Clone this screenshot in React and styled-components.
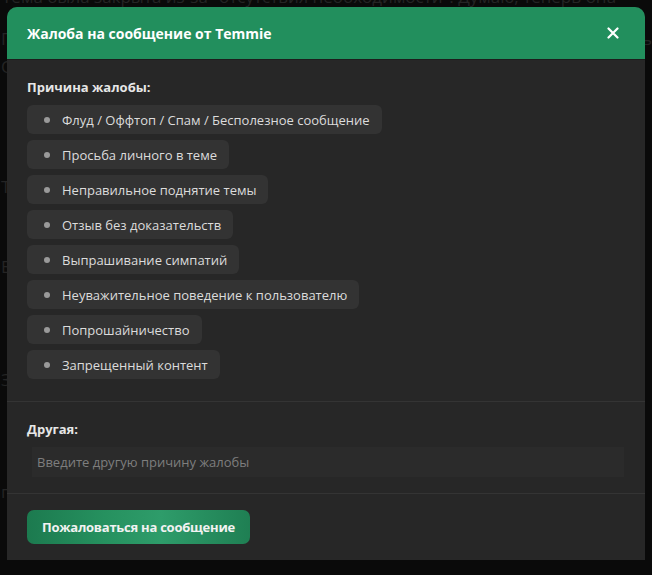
import styled, { createGlobalStyle } from "styled-components";

const GlobalStyle = createGlobalStyle`
  html, body {
    margin: 0;
    padding: 0;
    background: #0a0a0a;
    font-family: "Open Sans", "Noto Sans", sans-serif;
  }
  #root {
    position: relative;
    height: 575px;
    overflow: hidden;
  }
`;

const reasons = [
  "Флуд / Оффтоп / Спам / Бесполезное сообщение",
  "Просьба личного в теме",
  "Неправильное поднятие темы",
  "Отзыв без доказательств",
  "Выпрашивание симпатий",
  "Неуважительное поведение к пользователю",
  "Попрошайничество",
  "Запрещенный контент",
];

// обрывки текста страницы под затемнением
const behind = [
  { top: 22, left: "Г", right: "ь" },
  { top: 8, left: "О" },
  { top: 100, left: "Т" },
  { top: 60, left: "Бг" },
  { top: 93, left: "Зв" },
  { top: 92, left: "гу" },
];

const App = () => {
  return (
    <>
      <GlobalStyle />
      <PageBehind>
        <TopLine>Тема была закрыта из-за "отсутствия необходимости". Думаю, теперь она</TopLine>
        {behind.map((b, i) => (
          <BehindLine key={i} $top={b.top}>
            <span>{b.left}</span>
            <span>{b.right}</span>
          </BehindLine>
        ))}
      </PageBehind>

      <Modal>
        <Header>
          <Title>Жалоба на сообщение от Temmie</Title>
          <CloseButton aria-label="Закрыть">
            <svg width="12" height="12" viewBox="0 0 12 12">
              <path d="M1.5 1.5 L10.5 10.5 M10.5 1.5 L1.5 10.5" stroke="#fff" strokeWidth="2.2" strokeLinecap="round" />
            </svg>
          </CloseButton>
        </Header>

        <Section $pad="18px 20px 22px">
          <Label>Причина жалобы:</Label>
          <ReasonList>
            {reasons.map((r) => (
              <Reason key={r}>
                <Dot />
                {r}
              </Reason>
            ))}
          </ReasonList>
        </Section>

        <Section $pad="18px 20px 16px">
          <Label>Другая:</Label>
          <OtherInput placeholder="Введите другую причину жалобы" />
        </Section>

        <Footer>
          <SubmitButton>Пожаловаться на сообщение</SubmitButton>
        </Footer>
      </Modal>
    </>
  );
};

export default App;

const PageBehind = styled.div`
  color: #242424;
  font-size: 17px;
  line-height: 20px;
  white-space: nowrap;
`;

const TopLine = styled.div`
  margin-top: -13px;
  padding-left: 2px;
`;

const BehindLine = styled.div`
  display: flex;
  justify-content: space-between;
  margin-top: ${(p) => p.$top}px;
  padding: 0 0 0 1px;
`;

const Modal = styled.div`
  position: absolute;
  top: 7px;
  left: 7px;
  width: 638px;
  height: 553px;
  background: #272727;
  border-radius: 10px 10px 0 0;
  overflow: hidden;
  display: flex;
  flex-direction: column;
`;

const Header = styled.div`
  height: 53px;
  flex-shrink: 0;
  box-sizing: border-box;
  background: #228f5d;
  display: flex;
  align-items: center;
  justify-content: space-between;
  padding: 0 26px 0 20px;
  border-bottom: 1px solid #1d1d1d;
`;

const Title = styled.div`
  color: #fff;
  font-size: 14px;
  font-weight: 700;
`;

const CloseButton = styled.button`
  background: none;
  border: none;
  padding: 0;
  display: flex;
  cursor: pointer;
`;

const Section = styled.div`
  padding: ${(p) => p.$pad};
  border-bottom: 1px solid #343434;
`;

const Label = styled.div`
  color: #e6e6e6;
  font-size: 13px;
  font-weight: 700;
  line-height: 18px;
  margin-bottom: 9px;
`;

const ReasonList = styled.div`
  display: flex;
  flex-direction: column;
  align-items: flex-start;
  gap: 6px;
`;

const Reason = styled.div`
  display: flex;
  align-items: center;
  height: 29px;
  box-sizing: border-box;
  padding: 0 12px 0 17px;
  background: #333333;
  border-radius: 6px;
  color: #dcdcdc;
  font-size: 13px;
  cursor: pointer;
`;

const Dot = styled.span`
  width: 6px;
  height: 6px;
  border-radius: 50%;
  background: #9a9a9a;
  margin-right: 12px;
`;

const OtherInput = styled.input`
  display: block;
  box-sizing: border-box;
  width: 592px;
  height: 30px;
  margin-left: 5px;
  padding: 0 5px;
  background: #2b2b2b;
  border: none;
  outline: none;
  color: #ddd;
  font-family: "Open Sans", "Noto Sans", sans-serif;
  font-size: 13px;

  &::placeholder {
    color: #7e7e7e;
  }
`;

const Footer = styled.div`
  padding: 16px 20px;
`;

const SubmitButton = styled.button`
  height: 34px;
  padding: 0 15px;
  border: none;
  border-radius: 7px;
  background: linear-gradient(90deg, #1c7a4f 0%, #26915f 35%, #2e9c6a 60%, #1f7f53 100%);
  color: #f2f2f2;
  font-family: "Open Sans", "Noto Sans", sans-serif;
  font-size: 13px;
  font-weight: 700;
  letter-spacing: -0.25px;
  cursor: pointer;
`;
